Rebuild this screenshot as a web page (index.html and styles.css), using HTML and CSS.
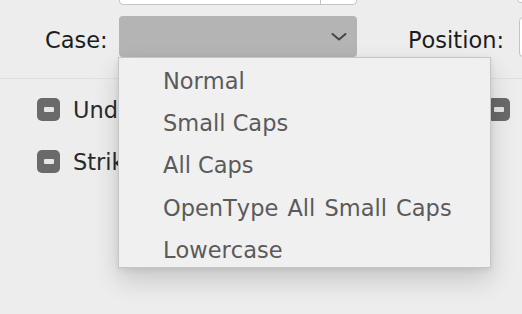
FILE: index.html
```html
<!DOCTYPE html>
<html>
<head>
<meta charset="utf-8">
<link rel="stylesheet" href="styles.css">
</head>
<body>
<div class="page">
  <section class="top">
    <div class="row-fields">
      <div class="stepper-field"><span class="stepper-part"></span></div>
      <div class="far-field"></div>
    </div>
    <div class="row-case">
      <span class="label case-label">Case:</span>
      <div class="select">
        <svg class="chevron" width="16" height="10" viewBox="0 0 16 10"><path d="M1.5 2 L8 7.5 L14.5 2" fill="none" stroke="#454545" stroke-width="2" stroke-linecap="round" stroke-linejoin="round"/></svg>
      </div>
      <span class="label pos-label">Position:</span>
      <div class="pos-field"></div>
    </div>
  </section>
  <section class="bottom">
    <div class="col">
      <div class="check-row"><span class="checkbox"><span class="dash"></span></span><span class="check-text">Underline</span></div>
      <div class="check-row"><span class="checkbox"><span class="dash"></span></span><span class="check-text">Strikethrough</span></div>
    </div>
    <div class="col">
      <div class="check-row"><span class="checkbox"><span class="dash"></span></span><span class="check-text">Ligatures</span></div>
    </div>
  </section>
  <ul class="menu">
    <li>Normal</li>
    <li>Small Caps</li>
    <li>All Caps</li>
    <li class="wide">OpenType All Small Caps</li>
    <li>Lowercase</li>
  </ul>
</div>
</body>
</html>
```

FILE: styles.css
```css
html, body {
  margin: 0;
  padding: 0;
}
body {
  width: 522px;
  height: 314px;
  overflow: hidden;
  background: #ededed;
  font-family: "DejaVu Sans", sans-serif;
  font-size: 22.5px;
  font-kerning: none;
}
.page {
  position: relative;
  width: 522px;
  height: 314px;
  overflow: hidden;
}
.top {
  border-bottom: 1px solid #e0e0e0;
  box-sizing: border-box;
  height: 79px;
}
.row-fields {
  display: flex;
  height: 5px;
  align-items: flex-end;
}
.stepper-field {
  margin-left: 119px;
  width: 238px;
  height: 30px;
  flex: none;
  background: #fff;
  border: 1px solid #c4c4c4;
  border-radius: 4px;
  box-sizing: border-box;
  display: flex;
  justify-content: flex-end;
}
.stepper-part {
  width: 35px;
  border-left: 1px solid #c4c4c4;
}
.far-field {
  margin-left: 160px;
  width: 60px;
  height: 30px;
  flex: none;
  background: #fff;
  border: 1px solid #c4c4c4;
  border-radius: 4px;
  box-sizing: border-box;
  margin-bottom: 2px;
}
.row-case {
  display: flex;
  align-items: flex-start;
  margin-top: 11px;
  height: 41px;
}
.label {
  color: #1c1c1c;
  line-height: 26px;
  margin-top: 11px;
  white-space: nowrap;
  flex: none;
}
.case-label {
  margin-left: 45px;
  width: 74px;
}
.select {
  width: 238px;
  height: 41px;
  flex: none;
  background: #b4b4b4;
  border-radius: 4px;
  display: flex;
  align-items: center;
  justify-content: flex-end;
  padding-right: 10px;
  box-sizing: border-box;
}
.chevron {
  margin-top: 1px;
}
.pos-label {
  margin-left: 51px;
  width: 111px;
}
.pos-field {
  width: 60px;
  height: 40px;
  flex: none;
  margin-top: 1px;
  background: #fff;
  border: 1px solid #c4c4c4;
  border-radius: 4px;
  box-sizing: border-box;
}
.bottom {
  display: grid;
  grid-template-columns: 450px auto;
  padding-top: 19px;
  padding-left: 37px;
}
.col {
  display: flex;
  flex-direction: column;
  gap: 29px;
}
.check-row {
  display: flex;
  align-items: center;
  height: 23px;
  gap: 13px;
  white-space: nowrap;
}
.checkbox {
  width: 23px;
  height: 23px;
  flex: none;
  background: #6a6a6a;
  border-radius: 5px;
  display: flex;
  align-items: center;
  justify-content: center;
}
.dash {
  width: 10px;
  height: 5px;
  background: #e6e6e6;
  border-radius: 1px;
}
.check-text {
  color: #2a2a2a;
  line-height: 26px;
  margin-top: 1px;
}
.menu {
  position: absolute;
  left: 118px;
  top: 57px;
  width: 373px;
  height: 211px;
  margin: 0;
  padding: 2px 0 0 44px;
  box-sizing: border-box;
  list-style: none;
  background: #f0f0f0;
  border: 1px solid #c6c6c6;
  box-shadow: 0 12px 24px rgba(0, 0, 0, 0.16), 0 2px 6px rgba(0, 0, 0, 0.08);
}
.menu li {
  line-height: 42.2px;
  color: #5a5a5a;
  white-space: nowrap;
}
.menu li.wide {
  word-spacing: 2px;
}
```
